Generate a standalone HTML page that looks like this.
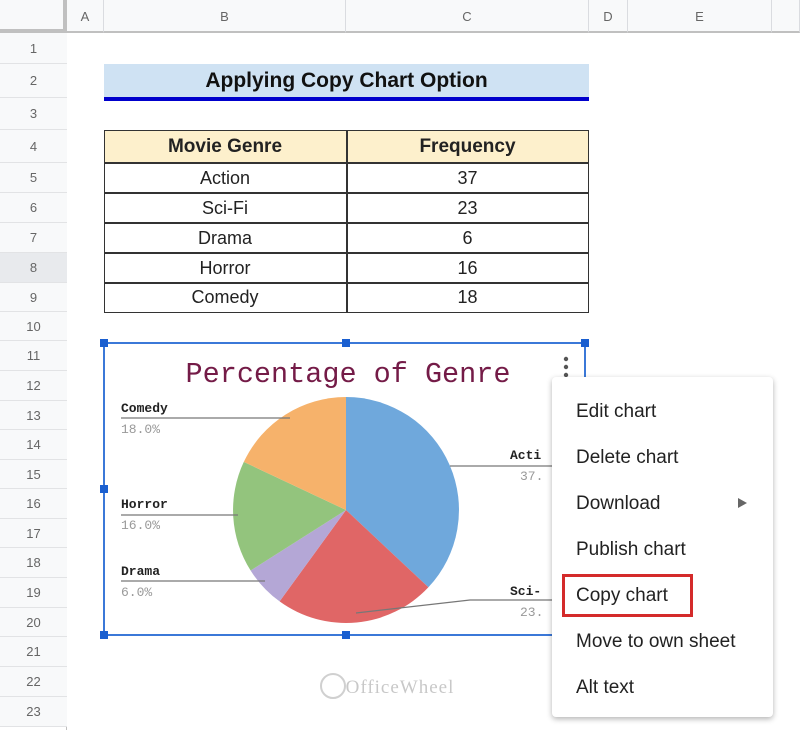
<!DOCTYPE html>
<html><head><meta charset="utf-8"><style>
*{margin:0;padding:0;box-sizing:border-box}
body{width:800px;height:730px;background:#fff;position:relative;overflow:hidden;font-family:"Liberation Sans",Arial,sans-serif}
.a{position:absolute}
.rn{position:absolute;left:0;width:67px;text-align:center;font-size:13px;color:#666;background:#f8f9fa;border-bottom:1px solid #e2e3e5}
.ch{position:absolute;top:0;height:33px;line-height:33px;text-align:center;font-size:13px;color:#666;background:#f8f9fa;border-right:1px solid #dadce0;border-bottom:2px solid #c0c0c0}
.cell{position:absolute;text-align:center;font-size:18px;color:#222}
.mi{position:absolute;left:576px;font-size:19px;color:#222;line-height:24px}
.lb{position:absolute;font-family:"Liberation Mono",monospace;font-size:13px;font-weight:bold;color:#222}
.pc{position:absolute;font-family:"Liberation Mono",monospace;font-size:13px;color:#999}
</style></head><body>
<div class="ch" style="left:0;width:67px;border-right:4px solid #c0c0c0;border-bottom:4px solid #c0c0c0"></div>
<div class="ch" style="left:67px;width:37px">A</div>
<div class="ch" style="left:104px;width:242px">B</div>
<div class="ch" style="left:346px;width:243px">C</div>
<div class="ch" style="left:589px;width:39px">D</div>
<div class="ch" style="left:628px;width:144px">E</div>
<div class="ch" style="left:772px;width:28px"></div>
<div class="a" style="left:66px;top:33px;width:1px;height:697px;background:#c0c0c0"></div>
<div class="rn" style="top:33px;height:31px;line-height:31px">1</div>
<div class="rn" style="top:64px;height:34px;line-height:34px">2</div>
<div class="rn" style="top:98px;height:32px;line-height:32px">3</div>
<div class="rn" style="top:130px;height:33px;line-height:33px">4</div>
<div class="rn" style="top:163px;height:30px;line-height:30px">5</div>
<div class="rn" style="top:193px;height:30px;line-height:30px">6</div>
<div class="rn" style="top:223px;height:30px;line-height:30px">7</div>
<div class="rn" style="top:253px;height:30px;line-height:30px;background:#e8eaed">8</div>
<div class="rn" style="top:283px;height:29px;line-height:29px">9</div>
<div class="rn" style="top:312px;height:29px;line-height:29px">10</div>
<div class="rn" style="top:341px;height:30px;line-height:30px">11</div>
<div class="rn" style="top:371px;height:30px;line-height:30px">12</div>
<div class="rn" style="top:401px;height:29px;line-height:29px">13</div>
<div class="rn" style="top:430px;height:30px;line-height:30px">14</div>
<div class="rn" style="top:460px;height:29px;line-height:29px">15</div>
<div class="rn" style="top:489px;height:30px;line-height:30px">16</div>
<div class="rn" style="top:519px;height:29px;line-height:29px">17</div>
<div class="rn" style="top:548px;height:30px;line-height:30px">18</div>
<div class="rn" style="top:578px;height:30px;line-height:30px">19</div>
<div class="rn" style="top:608px;height:29px;line-height:29px">20</div>
<div class="rn" style="top:637px;height:30px;line-height:30px">21</div>
<div class="rn" style="top:667px;height:30px;line-height:30px">22</div>
<div class="rn" style="top:697px;height:30px;line-height:30px">23</div>
<div class="a" style="left:104px;top:64px;width:485px;height:34px;background:#cfe2f3;text-align:center;line-height:34px;font-size:21px;font-weight:bold;color:#111">Applying Copy Chart Option</div>
<div class="a" style="left:104px;top:97px;width:485px;height:4px;background:#0000cc"></div>
<div class="a" style="left:104px;top:130px;width:485px;height:33px;background:#fdf0cc"></div>
<div class="a" style="left:104px;top:130px;width:485px;height:183px;border:1.5px solid #333"></div>
<div class="a" style="left:346px;top:130px;width:1.5px;height:183px;background:#333"></div>
<div class="a" style="left:104px;top:162px;width:485px;height:1.5px;background:#333"></div>
<div class="a" style="left:104px;top:192px;width:485px;height:1.5px;background:#333"></div>
<div class="a" style="left:104px;top:222px;width:485px;height:1.5px;background:#333"></div>
<div class="a" style="left:104px;top:252px;width:485px;height:1.5px;background:#333"></div>
<div class="a" style="left:104px;top:282px;width:485px;height:1.5px;background:#333"></div>
<div class="cell" style="left:104px;top:136px;width:242px;font-weight:bold;font-size:19px">Movie Genre</div>
<div class="cell" style="left:346px;top:136px;width:243px;font-weight:bold;font-size:19px">Frequency</div>
<div class="cell" style="left:104px;top:168px;width:242px">Action</div><div class="cell" style="left:346px;top:168px;width:243px">37</div>
<div class="cell" style="left:104px;top:198px;width:242px">Sci-Fi</div><div class="cell" style="left:346px;top:198px;width:243px">23</div>
<div class="cell" style="left:104px;top:228px;width:242px">Drama</div><div class="cell" style="left:346px;top:228px;width:243px">6</div>
<div class="cell" style="left:104px;top:258px;width:242px">Horror</div><div class="cell" style="left:346px;top:258px;width:243px">16</div>
<div class="cell" style="left:104px;top:287px;width:242px">Comedy</div><div class="cell" style="left:346px;top:287px;width:243px">18</div>
<svg class="a" style="left:0;top:0" width="800" height="730">
<rect x="104" y="343" width="481" height="292" fill="#fff" stroke="#3b78d8" stroke-width="2"/>
<g fill="#1a5fd0"><rect x="100" y="339" width="8" height="8"/><rect x="342" y="339" width="8" height="8"/><rect x="581" y="339" width="8" height="8"/><rect x="100" y="485" width="8" height="8"/><rect x="100" y="631" width="8" height="8"/><rect x="342" y="631" width="8" height="8"/></g>
<path d="M346 510 L346 397 A113 113 0 0 1 428.4 587.3Z" fill="#6fa8dc"/>
<path d="M346 510 L428.4 587.3 A113 113 0 0 1 279.6 601.4Z" fill="#e06666"/>
<path d="M346 510 L279.6 601.4 A113 113 0 0 1 250.6 570.5Z" fill="#b4a7d6"/>
<path d="M346 510 L250.6 570.5 A113 113 0 0 1 243.8 461.9Z" fill="#93c47d"/>
<path d="M346 510 L243.8 461.9 A113 113 0 0 1 346 397Z" fill="#f6b26b"/>
<g stroke="#777" stroke-width="1.2" fill="none">
<path d="M121 418 L290 418"/><path d="M121 515 L238 515"/><path d="M121 581 L265 581"/>
<path d="M450 466 L552 466"/><path d="M356 613 L470 600 L552 600"/>
</g>
<g fill="#555"><circle cx="566" cy="359" r="2.2"/><circle cx="566" cy="367" r="2.2"/><circle cx="566" cy="375" r="2.2"/></g>
<text x="348" y="382" text-anchor="middle" font-family="Liberation Mono, monospace" font-size="28.5" fill="#741b47">Percentage of Genre</text>
<text x="400" y="693" text-anchor="middle" font-family="Liberation Serif, serif" font-size="19" fill="#c8c8c8" letter-spacing="1">OfficeWheel</text>
<circle cx="333" cy="686" r="12" fill="none" stroke="#d0d0d0" stroke-width="2"/>
</svg>
<div class="lb" style="left:121px;top:401px">Comedy</div><div class="pc" style="left:121px;top:422px">18.0%</div>
<div class="lb" style="left:121px;top:497px">Horror</div><div class="pc" style="left:121px;top:518px">16.0%</div>
<div class="lb" style="left:121px;top:564px">Drama</div><div class="pc" style="left:121px;top:585px">6.0%</div>
<div class="lb" style="left:510px;top:448px">Acti</div><div class="pc" style="left:520px;top:469px">37.</div>
<div class="lb" style="left:510px;top:584px">Sci-</div><div class="pc" style="left:520px;top:605px">23.</div>
<div class="a" style="left:552px;top:377px;width:221px;height:340px;background:#fff;border-radius:4px;box-shadow:0 2px 6px rgba(0,0,0,.3)"></div>
<div class="mi" style="top:400px">Edit chart</div>
<div class="mi" style="top:446px">Delete chart</div>
<div class="mi" style="top:492px">Download</div>
<div class="a" style="left:738px;top:498px;width:0;height:0;border-left:9px solid #666;border-top:5px solid transparent;border-bottom:5px solid transparent"></div>
<div class="mi" style="top:538px">Publish chart</div>
<div class="mi" style="top:584px">Copy chart</div>
<div class="a" style="left:562px;top:574px;width:131px;height:43px;border:3px solid #d42a2a"></div>
<div class="mi" style="top:630px">Move to own sheet</div>
<div class="mi" style="top:676px">Alt text</div>
</body></html>
